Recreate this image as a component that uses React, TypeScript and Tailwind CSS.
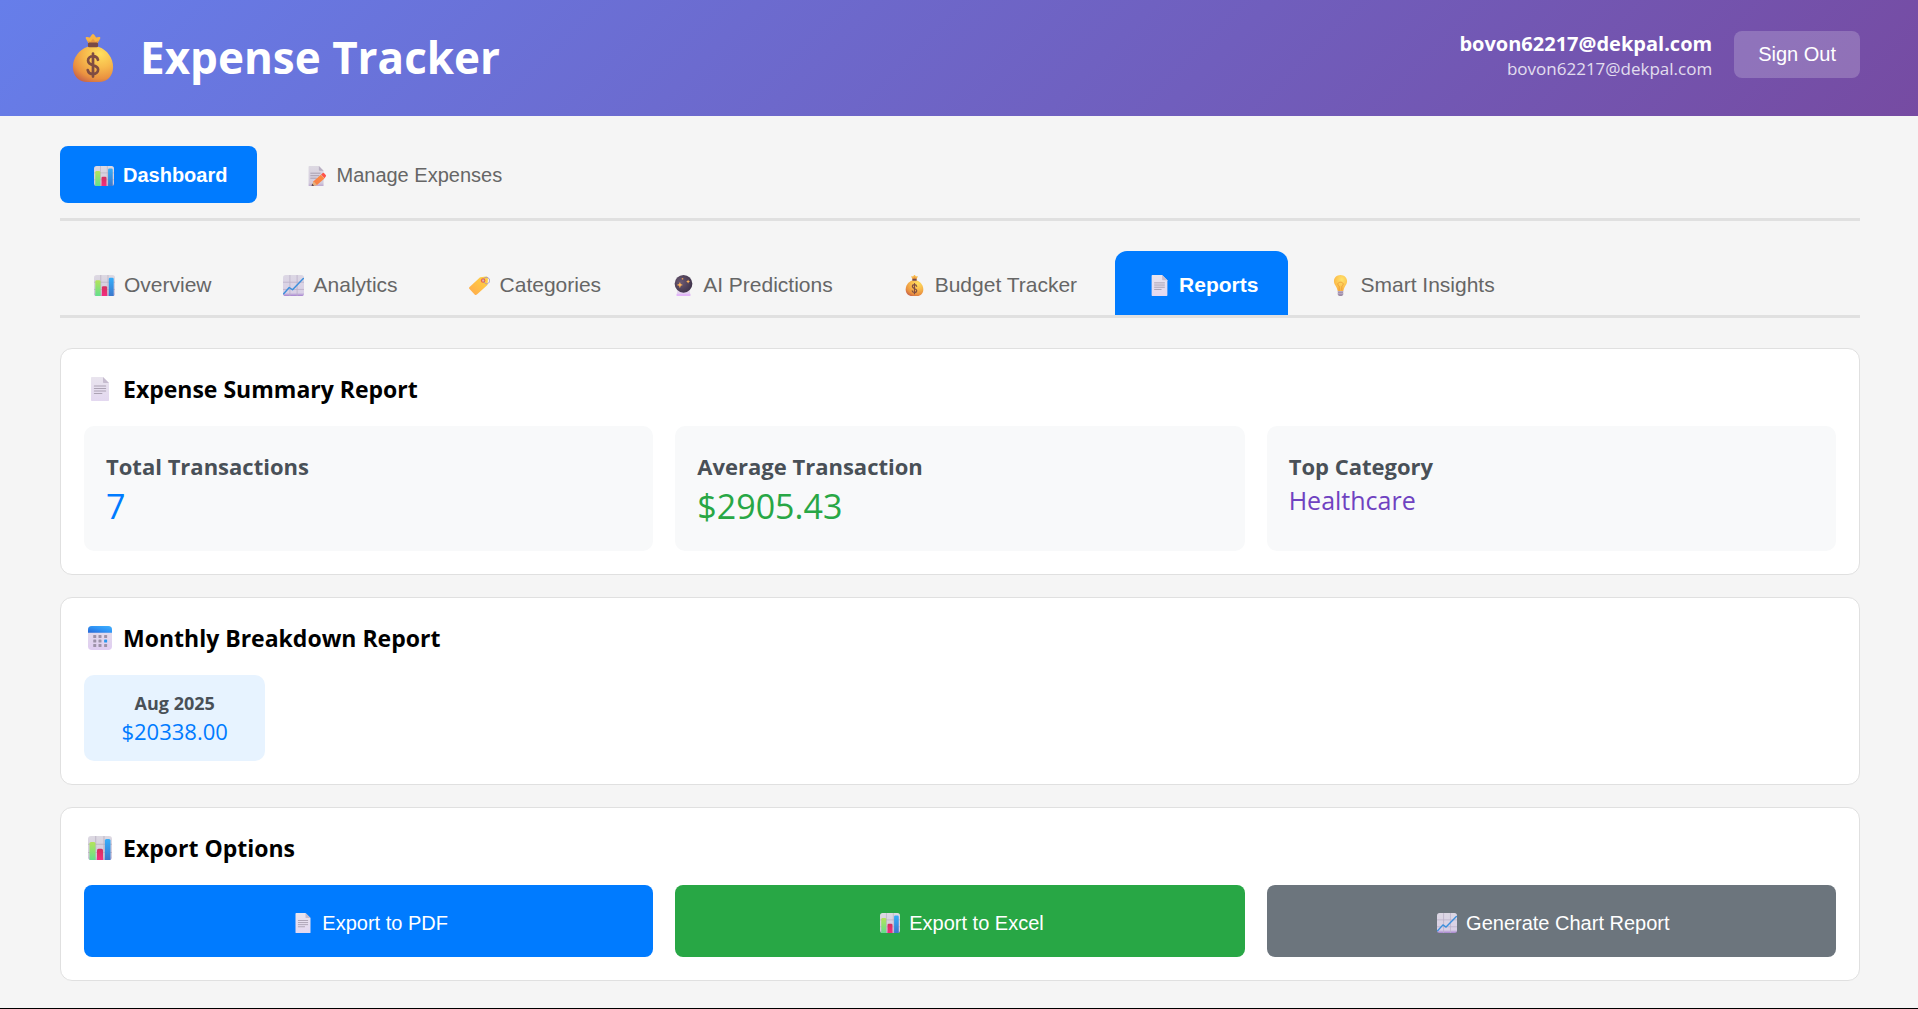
import type { ReactNode } from "react";

type IconProps = { className: string };

function Svg({ className, children }: IconProps & { children: ReactNode }) {
  return (
    <svg viewBox="0 0 32 32" className={className} aria-hidden="true">
      {children}
    </svg>
  );
}

/* Gradients shared by all the icons */
function IconDefs() {
  return (
    <svg className="absolute size-0" aria-hidden="true">
      <defs>
        <linearGradient id="paper" x1="0" y1="0" x2="0" y2="1">
          <stop offset="0" stopColor="#ddd9e2" />
          <stop offset="0.85" stopColor="#d3cbdd" />
          <stop offset="1" stopColor="#bda9cf" />
        </linearGradient>
        <linearGradient id="sheet" x1="0" y1="0" x2="0" y2="1">
          <stop offset="0" stopColor="#e9e4ee" />
          <stop offset="1" stopColor="#e3d8f0" />
        </linearGradient>
        <linearGradient id="trend" x1="0" y1="0" x2="0" y2="1">
          <stop offset="0" stopColor="#dcd7e4" />
          <stop offset="0.85" stopColor="#d9d0e6" />
          <stop offset="1" stopColor="#a682cf" />
        </linearGradient>
        <linearGradient id="green" x1="0" y1="0" x2="0" y2="1">
          <stop offset="0" stopColor="#b5e35a" />
          <stop offset="1" stopColor="#63e08d" />
        </linearGradient>
        <linearGradient id="pink" x1="0" y1="0" x2="0" y2="1">
          <stop offset="0" stopColor="#d3305c" />
          <stop offset="1" stopColor="#f52d80" />
        </linearGradient>
        <linearGradient id="blue" x1="0" y1="0" x2="0" y2="1">
          <stop offset="0" stopColor="#35aefb" />
          <stop offset="1" stopColor="#3b78cd" />
        </linearGradient>
        <radialGradient id="bag" cx="0.68" cy="0.2" r="0.88">
          <stop offset="0" stopColor="#ffdf5e" />
          <stop offset="0.45" stopColor="#f7b94c" />
          <stop offset="0.8" stopColor="#ea9140" />
          <stop offset="1" stopColor="#cb6848" />
        </radialGradient>
        <linearGradient id="tag" x1="1" y1="0" x2="0" y2="1">
          <stop offset="0" stopColor="#ffd53f" />
          <stop offset="1" stopColor="#ffa94e" />
        </linearGradient>
        <radialGradient id="ball" cx="0.35" cy="0.4" r="0.7">
          <stop offset="0" stopColor="#6d5a72" />
          <stop offset="1" stopColor="#3c3149" />
        </radialGradient>
        <linearGradient id="stand" x1="0" y1="0" x2="0" y2="1">
          <stop offset="0" stopColor="#e2dbe8" />
          <stop offset="1" stopColor="#e6c3fa" />
        </linearGradient>
        <radialGradient id="bulb" cx="0.6" cy="0.3" r="0.75">
          <stop offset="0" stopColor="#ffe36b" />
          <stop offset="1" stopColor="#fbb03f" />
        </radialGradient>
        <linearGradient id="calTop" x1="0" y1="1" x2="1" y2="0">
          <stop offset="0" stopColor="#2767d6" />
          <stop offset="0.5" stopColor="#2f93f5" />
          <stop offset="1" stopColor="#3fb2ff" />
        </linearGradient>
        <linearGradient id="calBody" x1="0" y1="0" x2="0" y2="1">
          <stop offset="0" stopColor="#e3dfe8" />
          <stop offset="1" stopColor="#e0cdf2" />
        </linearGradient>
        <linearGradient id="pencil" x1="1" y1="0" x2="0" y2="1">
          <stop offset="0" stopColor="#ff9040" />
          <stop offset="1" stopColor="#f5784a" />
        </linearGradient>
      </defs>
    </svg>
  );
}

function BarChart({ className }: IconProps) {
  return (
    <Svg className={className}>
      <rect width="32" height="32" rx="4" fill="url(#paper)" />
      <path d="M0 11h32M0 22h32M10.300 0v32M21.300 0v32" stroke="#b5adbf" strokeWidth="1" />
      <path d="M2 32V10a2 2 0 0 1 2-2h4a2 2 0 0 1 2 2v22z" fill="url(#green)" />
      <path d="M12 32V19a2 2 0 0 1 2-2h4a2 2 0 0 1 2 2v13z" fill="url(#pink)" />
      <path d="M22.500 32V6a2 2 0 0 1 2-2h3.500a2 2 0 0 1 2 2v26z" fill="url(#blue)" />
    </Svg>
  );
}

function Trend({ className }: IconProps) {
  return (
    <Svg className={className}>
      <rect width="32" height="32" rx="4" fill="url(#trend)" />
      <path d="M0 11h32M0 22h32M10.500 0v32M21.500 0v32" stroke="#bab0c8" strokeWidth="1.200" />
      <path d="M1 28.500 9.500 19l5 3.500L31 5.500" fill="none" stroke="#3b8fdc" strokeWidth="2.200" strokeLinecap="round" strokeLinejoin="round" />
    </Svg>
  );
}

function Page({ className }: IconProps) {
  return (
    <Svg className={className}>
      <path d="M4 1a1 1 0 0 1 1-1h15l8 8v23a1 1 0 0 1-1 1H5a1 1 0 0 1-1-1z" fill="url(#sheet)" />
      <path d="M20 0l8 8h-7a1 1 0 0 1-1-1z" fill="#c6bccf" />
      <path d="M8.500 12h15M8.500 15.300h15M8.500 18.600h15M8.500 22h10" stroke="#aba2b3" strokeWidth="1.500" strokeLinecap="round" />
    </Svg>
  );
}

function Memo({ className }: IconProps) {
  return (
    <Svg className={className}>
      <path d="M2.500 1a1 1 0 0 1 1-1H19l7.500 7.500V31a1 1 0 0 1-1 1h-22a1 1 0 0 1-1-1z" fill="url(#paper)" />
      <path d="M19 0l7.500 7.500H20a1 1 0 0 1-1-1z" fill="#b8afc2" />
      <path d="M6 11.500h15M6 15.500h13M6 19.500h9" stroke="#a69dae" strokeWidth="1.500" strokeLinecap="round" />
      <path d="M10.500 24.500 22 14l6 6-12 10.500-8 1z" fill="url(#pencil)" />
      <path d="M22.500 13.500l2.300-2a2 2 0 0 1 2.700 0l2.500 2.700a2 2 0 0 1 0 2.700L28 19.500z" fill="#ff5348" />
      <path d="M10.500 24.500l5.500 6-8.500 1.500z" fill="#e5b27c" />
      <path d="M8.300 28.500l3 3-4 .5z" fill="#4b4051" />
    </Svg>
  );
}

function Tag({ className }: IconProps) {
  return (
    <Svg className={className}>
      <path d="M17.500 3.500 26 2.200a2.500 2.500 0 0 1 2.800 2.600L28.300 14a3 3 0 0 1-1 2L12 29.800a2.500 2.500 0 0 1-3.400-.1L.8 21.500a2.300 2.300 0 0 1 .1-3.300L15.700 4.500a3 3 0 0 1 1.800-1z" fill="url(#tag)" />
      <circle cx="21.500" cy="8.500" r="3.400" fill="#e8634f" />
      <circle cx="21.500" cy="8.500" r="1.700" fill="#ffd0a8" />
      <path d="M21 8.500C22 4 27 2 30 5s1 8-3 8.500c-2 .3-4-2-5.500-5" fill="none" stroke="#a892bd" strokeWidth="1.400" />
    </Svg>
  );
}

function CrystalBall({ className }: IconProps) {
  return (
    <Svg className={className}>
      <path d="M7 23h18l1.700 7.500A1.300 1.300 0 0 1 25.500 32h-19a1.300 1.300 0 0 1-1.200-1.500z" fill="url(#stand)" />
      <path d="M5.500 30.500h21" stroke="#dfa6fb" strokeWidth="1.500" />
      <circle cx="16" cy="13.500" r="13.500" fill="url(#ball)" />
      <path d="M10.500 10.500l1.300 3.400 3.400 1.300-3.400 1.300-1.300 3.600-1.300-3.600-3.600-1.300 3.600-1.300z" fill="#ffb55c" />
      <path d="M23 7l.9 2.100 2.100.9-2.100.9L23 13l-.9-2.100L20 10l2.100-.9z" fill="#ffb55c" />
      <circle cx="14.500" cy="5.700" r="1.300" fill="#f0a259" />
    </Svg>
  );
}

function MoneyBag({ className }: IconProps) {
  return (
    <Svg className={className}>
      <path d="M13 6.200 11.200 3c-.3-.7.200-1.200.9-1l1.800.4L15.200.5a1.100 1.100 0 0 1 1.600 0l1.300 1.900 1.800-.4c.7-.2 1.200.3.9 1L19 6.200z" fill="#f8b545" />
      <path d="M13 6.200l-.6-1.800 1.900.7L16 3.200l1.700 1.900 1.900-.7-.6 1.800z" fill="#e99a45" />
      <path d="M12.500 8.500h7C25.500 10.500 29.400 16 29.400 22c0 6-4 10-9.500 10h-7.800C6.600 32 2.600 28 2.600 22c0-6 3.900-11.500 9.900-13.500z" fill="url(#bag)" />
      <rect x="12.600" y="5.700" width="6.800" height="3.200" rx="1" fill="#7a4a45" />
      <path d="M19.300 17.200c-.4-1.600-1.600-2.400-3.300-2.400-1.900 0-3.300 1.200-3.300 2.900 0 4.200 6.700 2.200 6.700 6 0 1.800-1.400 3-3.400 3-1.800 0-3.100-.9-3.500-2.600M16 13v15.400" fill="none" stroke="#7f4c42" strokeWidth="1.800" strokeLinecap="round" />
    </Svg>
  );
}

function Bulb({ className }: IconProps) {
  return (
    <Svg className={className}>
      <path d="M12 23h8v6.500A2.500 2.500 0 0 1 17.500 32h-3a2.500 2.500 0 0 1-2.500-2.500z" fill="#9b8aa5" />
      <path d="M11.500 25.500h9M11.500 28.500h9" stroke="#c5b6cf" strokeWidth="1.300" />
      <path d="M16 0c5.800 0 10 4.200 10 9.700 0 4-2.200 6.400-3.800 8.800-.9 1.400-1.200 3-1.500 4.500-.2.900-.7 1.300-1.500 1.300h-6.400c-.8 0-1.300-.4-1.500-1.300-.3-1.500-.6-3.100-1.500-4.500C8.200 16.100 6 13.700 6 9.700 6 4.200 10.200 0 16 0z" fill="url(#bulb)" />
      <path d="M14 23.500V17c-3-1.500-3-6 2-6s5 4.500 2 6v6.500" fill="none" stroke="#ec9b37" strokeWidth="1.300" />
    </Svg>
  );
}

function Calendar({ className }: IconProps) {
  return (
    <Svg className={className}>
      <rect width="32" height="32" rx="5" fill="url(#calBody)" />
      <path d="M0 9V5a5 5 0 0 1 5-5h22a5 5 0 0 1 5 5v4z" fill="url(#calTop)" />
      <g fill="#9d92a8">
        <rect x="7" y="12" width="4" height="4" rx="0.800" />
        <rect x="14" y="12" width="4" height="4" rx="0.800" />
        <rect x="21.500" y="12" width="4" height="4" rx="0.800" />
        <rect x="7" y="18" width="4" height="4" rx="0.800" />
        <rect x="14" y="18" width="4" height="4" rx="0.800" />
        <rect x="7" y="24" width="4" height="4" rx="0.800" />
        <rect x="14" y="24" width="4" height="4" rx="0.800" />
        <rect x="21.500" y="24" width="4" height="4" rx="0.800" />
      </g>
      <rect x="21.500" y="18" width="4" height="4" rx="0.800" fill="#2a97ee" />
    </Svg>
  );
}

type IconType = (props: IconProps) => ReactNode;

const tabs: { label: string; Icon: IconType; active?: boolean }[] = [
  { label: "Overview", Icon: BarChart },
  { label: "Analytics", Icon: Trend },
  { label: "Categories", Icon: Tag },
  { label: "AI Predictions", Icon: CrystalBall },
  { label: "Budget Tracker", Icon: MoneyBag },
  { label: "Reports", Icon: Page, active: true },
  { label: "Smart Insights", Icon: Bulb },
];

const stats = [
  { label: "Total Transactions", value: "7", style: "text-[34px] leading-[45px] text-[#007bff]" },
  { label: "Average Transaction", value: "$2905.43", style: "text-[34px] leading-[45px] text-[#28a745]" },
  { label: "Top Category", value: "Healthcare", style: "text-[25px] leading-8 text-[#6f42c1]" },
];

const exportsList: { label: string; Icon: IconType; style: string }[] = [
  { label: "Export to PDF", Icon: Page, style: "bg-[#007bff]" },
  { label: "Export to Excel", Icon: BarChart, style: "bg-[#28a745]" },
  { label: "Generate Chart Report", Icon: Trend, style: "bg-[#6c757d]" },
];

function Card({ title, Icon, children }: { title: string; Icon: IconType; children: ReactNode }) {
  return (
    <section className="rounded-xl border border-[#e0e0e0] bg-white p-[23px]">
      <h3 className="mb-5 flex items-center gap-[7px] text-[23px] leading-[34px] font-bold text-black">
        <span className="flex w-8 justify-center">
          <Icon className="size-6" />
        </span>
        {title}
      </h3>
      {children}
    </section>
  );
}

export default function App() {
  return (
    <div className="min-h-screen border-b border-black bg-[#f5f5f5] font-['Open_Sans','Noto_Sans',sans-serif]">
      <IconDefs />
      <header className="flex items-start justify-between bg-[linear-gradient(135deg,#667eea_0%,#764ba2_100%)] pt-[25px] pr-[58px] pb-[26px] pl-[60px] text-white">
        <h1 className="flex items-center gap-3.5 text-[44px] leading-[65px] font-bold">
          <span className="flex w-[66px] justify-center">
            <MoneyBag className="size-12" />
          </span>
          Expense Tracker
        </h1>
        <div className="flex items-center gap-[22px] pt-0.5">
          <div className="pt-1 text-right">
            <div className="text-[20px] leading-[26px] font-bold">bovon62217@dekpal.com</div>
            <div className="text-[17px] leading-6 opacity-80">bovon62217@dekpal.com</div>
          </div>
          <button
            type="button"
            className="rounded-lg bg-white/20 px-6 py-3 font-['Liberation_Sans',Arial,sans-serif] text-[20px] leading-[23px]"
          >
            Sign Out
          </button>
        </div>
      </header>

      <main className="pt-[30px] pr-[58px] pb-[27px] pl-[60px]">
        <nav className="flex gap-4 border-b-3 border-[#e0e0e0] pb-[15px] font-['Liberation_Sans',Arial,sans-serif] text-[20px] leading-[27px]">
          <button type="button" className="flex items-center gap-[5px] rounded-lg bg-[#007bff] px-[30px] pt-4 pb-3.5 font-bold text-white">
            <span className="flex w-7 justify-center">
              <BarChart className="size-5" />
            </span>
            Dashboard
          </button>
          <button type="button" className="flex items-center gap-[5px] rounded-lg px-[30px] pt-4 pb-3.5 text-[#666]">
            <span className="flex w-7 justify-center">
              <Memo className="size-5" />
            </span>
            Manage Expenses
          </button>
        </nav>

        <nav className="mt-[30px] flex gap-2 border-b-3 border-[#e0e0e0] font-['Liberation_Sans',Arial,sans-serif] text-[21px] leading-7">
          {tabs.map(({ label, Icon, active }) => (
            <button
              key={label}
              type="button"
              className={
                active
                  ? "flex items-center gap-1.5 rounded-t-xl bg-[#007bff] px-[30px] pt-5 pb-4 font-bold text-white"
                  : "flex items-center gap-1.5 px-[30px] pt-5 pb-4 text-[#666]"
              }
            >
              <span className="flex w-7 justify-center">
                <Icon className="size-[21px]" />
              </span>
              {label}
            </button>
          ))}
        </nav>

        <div className="mt-[30px] flex flex-col gap-[22px]">
          <Card title="Expense Summary Report" Icon={Page}>
            <div className="grid grid-cols-3 gap-[22px]">
              {stats.map(({ label, value, style }) => (
                <div key={label} className="rounded-[10px] bg-[#f8f9fa] p-[22px]">
                  <h4 className="text-[22px] leading-9 font-bold text-[#495057]">{label}</h4>
                  <p className={style}>{value}</p>
                </div>
              ))}
            </div>
          </Card>

          <Card title="Monthly Breakdown Report" Icon={Calendar}>
            <div className="grid grid-cols-9 gap-[15px]">
              <div className="rounded-[10px] bg-[#e7f3ff] py-[15px] text-center">
                <div className="text-[18px] leading-[26px] font-bold text-[#495057]">Aug 2025</div>
                <div className="text-[22px] leading-[30px] text-[#007bff]">$20338.00</div>
              </div>
            </div>
          </Card>

          <Card title="Export Options" Icon={BarChart}>
            <div className="grid grid-cols-3 gap-[22px]">
              {exportsList.map(({ label, Icon, style }) => (
                <button
                  key={label}
                  type="button"
                  className={`flex items-center justify-center gap-[5px] rounded-lg pt-6 pb-5 font-['Liberation_Sans',Arial,sans-serif] text-[20px] leading-7 text-white ${style}`}
                >
                  <span className="flex w-7 justify-center">
                    <Icon className="size-5" />
                  </span>
                  {label}
                </button>
              ))}
            </div>
          </Card>
        </div>
      </main>
    </div>
  );
}
